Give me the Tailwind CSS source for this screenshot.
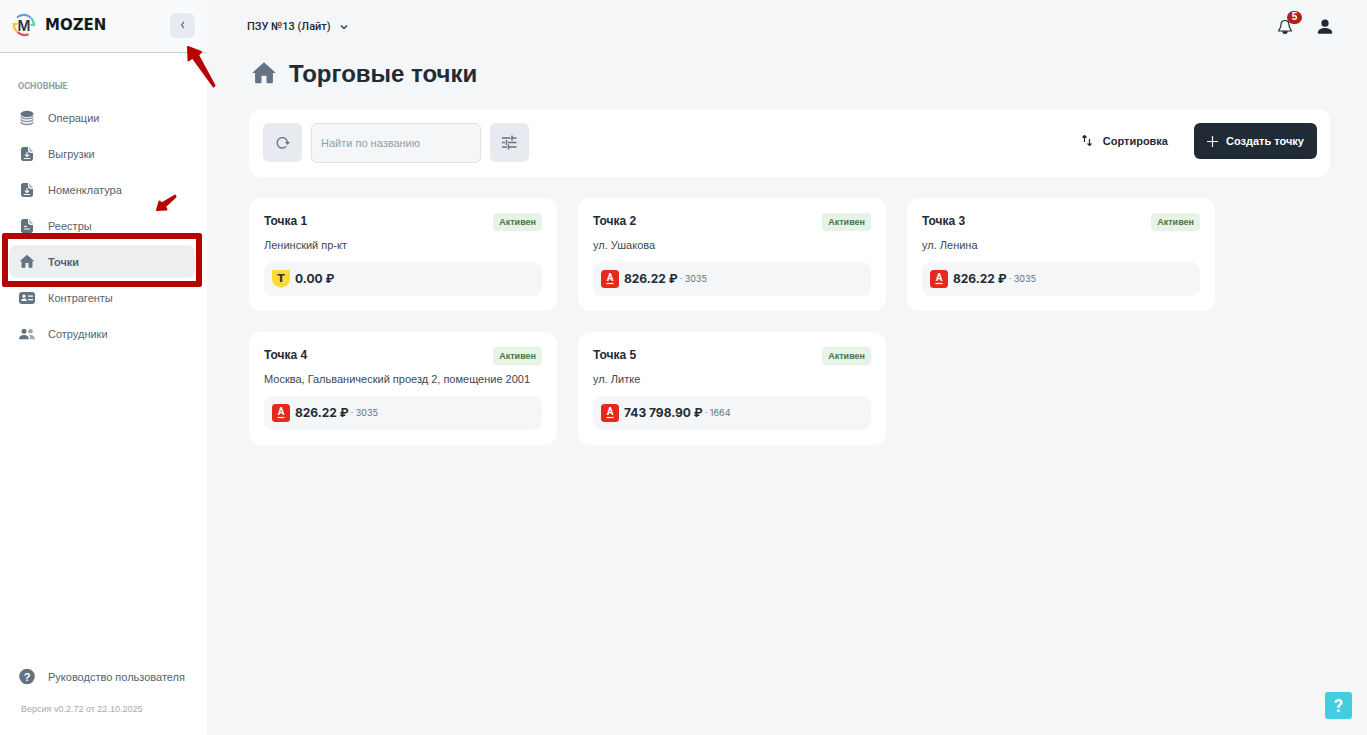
<!DOCTYPE html>
<html lang="ru">
  <head>
    <meta charset="UTF-8" />
    <meta name="viewport" content="width=device-width, initial-scale=1.0" />
    <title>Mozen — Торговые точки</title>
    <script src="https://cdn.jsdelivr.net/npm/@tailwindcss/browser@4"></script>
  </head>
  <body class="bg-[#f4f6f8] font-['Liberation_Sans',Arial,sans-serif] text-[11px] leading-4 text-[#212b36]">
    <!-- Icon sprite -->
    <svg class="hidden">
      <symbol id="home" viewBox="0 0 24 24">
        <path fill="currentColor" d="M12 1.200 1 11h2.800v8.600c0 .5.4.9.9.9h4.100c.5 0 .9-.4.9-.9v-6.100h4.600v6.100c0 .5.4.9.9.9h4.100c.5 0 .9-.4.9-.9V11H23z" />
      </symbol>
      <symbol id="export" viewBox="0 0 16 16">
        <path fill="currentColor" d="M4.500 1H9v3.200C9 5.800 10.200 7 11.800 7H14v5.500c0 1.700-1 2.500-2.500 2.500h-7C2.800 15 2 14 2 12.500v-9C2 2 3 1 4.500 1z" />
        <path fill="currentColor" opacity=".5" d="M10.200 1.100 14 5.700h-2.200c-1 0-1.600-.6-1.600-1.500z" />
        <path fill="none" stroke="#fff" stroke-width="1.100" stroke-linecap="round" stroke-linejoin="round" d="M8 6.200v4M6.200 8.800 8 10.600l1.800-1.800M5.200 12.500h5.600" />
      </symbol>
      <symbol id="registry" viewBox="0 0 16 16">
        <path fill="currentColor" d="M4.500 1H9v3.200C9 5.800 10.200 7 11.800 7H14v5.500c0 1.700-1 2.500-2.500 2.500h-7C2.800 15 2 14 2 12.500v-9C2 2 3 1 4.500 1z" />
        <path fill="currentColor" opacity=".5" d="M10.200 1.100 14 5.700h-2.200c-1 0-1.600-.6-1.600-1.500z" />
        <path fill="none" stroke="#fff" stroke-width="1.100" stroke-linecap="round" d="M5.500 8.500h2M5.500 11h5" />
      </symbol>
      <symbol id="alfa" viewBox="0 0 18 18">
        <rect width="18" height="18" rx="3.500" fill="#e42a1d" />
        <text x="9" y="11" text-anchor="middle" font-family="Roboto" font-size="10" font-weight="700" fill="#fff">A</text>
        <path d="M5.500 13.500h7" stroke="#fff" stroke-width="1.200" />
      </symbol>
    </svg>

    <div class="flex min-h-screen">
      <!-- Sidebar -->
      <aside class="flex w-[207px] shrink-0 flex-col bg-white">
        <div class="flex h-[53px] items-center justify-between border-b border-[#c9ced4] bg-[#f9fafb] pr-3 pb-[2px] pl-3">
          <a href="#" class="flex items-center gap-[9px] text-[#141a21]">
            <svg class="size-6" viewBox="0 0 24 24" fill="none" stroke-width="2.200">
              <path stroke="#5b9fe0" d="M5 4.500C9 1 15 1.200 18.500 4.500" />
              <path stroke="#5fd39a" d="M18.500 4.500c2.300 2 3.300 4.500 3.500 7.500h-3.500" />
              <path stroke="#f5c044" d="M5.500 11H1.800c0 3 1.200 6 3.700 8" />
              <path stroke="#e8505f" d="M5.500 19c3 3 7 3.800 11 2.400" />
              <text x="12" y="17.500" text-anchor="middle" font-family="Inter" font-size="14" font-weight="600" fill="#2d3540">M</text>
            </svg>
            <span class="font-['DejaVu_Sans',sans-serif] text-[15px] font-bold">MOZEN</span>
          </a>
          <button aria-label="Свернуть меню" class="flex size-[25px] items-center justify-center rounded-md bg-[#e7eaef] text-[#637381]">
            <svg class="size-3" viewBox="0 0 12 12" fill="none" stroke="currentColor" stroke-width="1.200"><path d="M7 3 4.500 6 7 9" /></svg>
          </button>
        </div>

        <nav class="pt-[26px] pr-3 pl-[9px]">
          <h2 class="mb-2 pl-[9px] font-['Roboto',sans-serif] text-[9px] leading-[14px] font-bold text-[#919eab]">ОСНОВНЫЕ</h2>
          <ul class="flex flex-col gap-[3px] text-[#55636f]">
            <li>
              <a href="#" class="flex h-[33px] items-center gap-3 rounded-lg px-[9px]">
                <svg class="h-4 w-[18px] text-[#637381]" viewBox="0 0 18 16">
                  <ellipse cx="9" cy="4" rx="6.500" ry="3.300" fill="currentColor" />
                  <path fill="none" stroke="currentColor" stroke-width="1.500" opacity=".75" d="M2.800 6.500c1.200 3 11.200 3 12.400 0M2.800 9.300c1.200 3 11.200 3 12.400 0M2.800 12c1.200 3.200 11.200 3.200 12.400 0" />
                </svg>
                Операции
              </a>
            </li>
            <li>
              <a href="#" class="flex h-[33px] items-center gap-3 rounded-lg px-[9px]">
                <svg class="h-4 w-[18px] text-[#637381]"><use href="#export" /></svg>
                Выгрузки
              </a>
            </li>
            <li>
              <a href="#" class="flex h-[33px] items-center gap-3 rounded-lg px-[9px]">
                <svg class="h-4 w-[18px] text-[#637381]"><use href="#export" /></svg>
                Номенклатура
              </a>
            </li>
            <li>
              <a href="#" class="flex h-[33px] items-center gap-3 rounded-lg px-[9px]">
                <svg class="h-4 w-[18px] text-[#637381]"><use href="#registry" /></svg>
                Реестры
              </a>
            </li>
            <li class="relative">
              <a href="#" aria-current="page" class="flex h-[33px] items-center gap-3 rounded-lg bg-[#edeef0] px-[9px] font-bold">
                <svg class="h-4 w-[18px] text-[#637381]"><use href="#home" /></svg>
                Точки
              </a>
              <span class="pointer-events-none absolute -inset-x-[7px] -top-3 -bottom-[9px] rounded-xs border-6 border-[#b50502]"></span>
            </li>
            <li>
              <a href="#" class="flex h-[33px] items-center gap-3 rounded-lg px-[9px]">
                <svg class="h-4 w-[18px] text-[#637381]" viewBox="0 0 18 16">
                  <rect x="1" y="2" width="16" height="12" rx="3" fill="currentColor" />
                  <g fill="#fff"><circle cx="6" cy="6.200" r="1.600" /><path d="M3.300 11c0-3.200 5.400-3.200 5.400 0z" /><path d="M10 5.500h5v1.200h-5zM10 9h5v1.200h-5z" /></g>
                </svg>
                Контрагенты
              </a>
            </li>
            <li>
              <a href="#" class="flex h-[33px] items-center gap-3 rounded-lg px-[9px]">
                <svg class="h-4 w-[18px] text-[#637381]" viewBox="0 0 18 16" fill="currentColor">
                  <circle cx="6" cy="5.200" r="2.500" />
                  <path d="M1 13.200c0-2.800 2-4.200 5-4.200s4.800 1.400 4.800 4.200z" />
                  <g opacity=".6"><circle cx="12.500" cy="5.200" r="2.300" /><path d="M11 9c3.500-.4 6 1 6 4.200h-5c.1-1.700-.2-3-1-4.200z" /></g>
                </svg>
                Сотрудники
              </a>
            </li>
          </ul>
        </nav>

        <div class="mt-auto px-[18px] pb-[19px]">
          <a href="#" class="flex h-[33px] items-center gap-3 whitespace-nowrap text-[#55636f]">
            <svg class="size-[18px] shrink-0" viewBox="0 0 18 18">
              <circle cx="9" cy="8.500" r="7.800" fill="#637381" />
              <text x="9" y="12.500" text-anchor="middle" font-size="11" font-weight="700" fill="#fff">?</text>
            </svg>
            Руководство пользователя
          </a>
          <p class="mt-[9px] pl-[3px] text-[9px] leading-[14px] text-[#a0abb6]">Версия v0.2.72 от 22.10.2025</p>
        </div>
      </aside>

      <!-- Content -->
      <div class="min-w-0 flex-1">
        <header class="flex h-[53px] items-center justify-between pr-[34px] pl-10">
          <button class="flex items-center gap-2 font-['Roboto',sans-serif] font-medium">
            ПЗУ №13 (Лайт)
            <svg class="size-[10px]" viewBox="0 0 10 10" fill="none" stroke="currentColor" stroke-width="1.200"><path d="M2 3.500 5 6.500 8 3.500" /></svg>
          </button>
          <div class="flex items-center gap-6">
            <button aria-label="Уведомления" class="relative">
              <svg class="size-4" viewBox="0 0 16 16" fill="none" stroke="currentColor" stroke-width="1.200" stroke-linejoin="round">
                <path d="M8 1.500c-2.800 0-4 1.900-4 4.200 0 3.300-1.600 4-2.500 6.300h13C13.600 9.700 12 9 12 5.700c0-2.300-1.200-4.200-4-4.200z" />
                <path fill="currentColor" d="M5.800 12.800h4.400C9.800 15 6.200 15 5.800 12.800z" />
              </svg>
              <span class="absolute -top-2 left-[10px] flex h-[13px] w-[15px] items-center justify-center rounded-full bg-[#b02318] text-[10px] font-bold text-white">5</span>
            </button>
            <button aria-label="Профиль">
              <svg class="size-4" viewBox="0 0 16 16" fill="currentColor">
                <circle cx="8" cy="4.200" r="3.600" />
                <path d="M.8 13.800C.8 7.500 15.200 7.500 15.200 13.800c0 .6-.3.900-.9.900H1.700c-.6 0-.9-.3-.9-.9z" />
              </svg>
            </button>
          </div>
        </header>

        <main class="pr-[37px] pl-[42px]">
          <div class="flex h-[42px] items-center gap-3 pl-[2px]">
            <svg class="size-[26px] text-[#637381]"><use href="#home" /></svg>
            <h1 class="text-2xl font-bold">Торговые точки</h1>
          </div>

          <div class="mt-[14px] flex items-start justify-between rounded-xl bg-white p-[14px] pr-[13px]">
            <div class="flex items-start gap-[9px]">
              <button aria-label="Обновить" class="flex size-[39px] items-center justify-center rounded-md bg-[#e7eaef] text-[#637381]">
                <svg class="size-4" viewBox="0 0 16 16" fill="none" stroke="currentColor" stroke-width="1.300">
                  <path d="M11 11.500A5.200 5.200 0 1 1 12.500 7.500" />
                  <path fill="currentColor" stroke="none" d="M10 7h5l-2.500 3z" />
                </svg>
              </button>
              <input type="text" aria-label="Найти по названию" placeholder="Найти по названию" class="h-10 w-[170px] rounded-md border border-[#dce0e4] bg-[#f4f6f8] px-[9px] placeholder:text-[#919eab]" />
              <button aria-label="Фильтры" class="flex size-[39px] items-center justify-center rounded-md bg-[#e7eaef] text-[#637381]">
                <svg class="size-4" viewBox="0 0 16 16" fill="none" stroke="currentColor" stroke-width="1.500">
                  <path d="M0 3h8.500M10 .5v5M10 3h4.500M0 7.500h3M4.500 5v5M6 7.500h8.500M0 12h5M6.500 9.500v5M6.500 12h8" />
                </svg>
              </button>
            </div>
            <div class="flex items-center gap-[26px] font-bold">
              <button class="flex items-center gap-[10px]">
                <svg class="size-3" viewBox="0 0 12 12" fill="none" stroke="currentColor" stroke-width="1.200">
                  <path d="M3.500 7V.5M1.500 2.500l2-2 2 2M8.500 4v6.500M6.500 8.500l2 2 2-2" />
                </svg>
                Сортировка
              </button>
              <button class="flex h-9 items-center gap-2 rounded-md bg-[#212b36] px-[13px] text-white">
                <svg class="size-[11px]" viewBox="0 0 11 11" stroke="currentColor" stroke-width="1.200"><path d="M5.500 0v11M0 5.500h11" /></svg>
                Создать точку
              </button>
            </div>
          </div>

          <div class="mt-[21px] grid grid-cols-[repeat(auto-fill,308px)] gap-[21px]">
            <article class="rounded-xl bg-white p-[15px]">
              <div class="flex items-start justify-between">
                <h3 class="text-[12px] leading-4 font-bold">Точка 1</h3>
                <span class="flex h-[18px] items-center rounded bg-[#e8f3e8] px-[6px] text-[9px] font-bold text-[#47784a]">Активен</span>
              </div>
              <p class="mt-[6px] text-[#3d4853]">Ленинский пр-кт</p>
              <div class="mt-[9px] flex h-[34px] items-center gap-[5px] rounded-[9px] bg-[#f4f6f8] px-2">
                <svg class="size-[18px]" viewBox="0 0 18 18">
                  <path fill="#fbdc36" d="M0 0h18v9c0 3.200-1.500 5.300-4 6.700L9 18l-5-2.300C1.500 14.300 0 12.200 0 9z" />
                  <text x="9" y="12" text-anchor="middle" font-family="DejaVu Sans" font-size="11" font-weight="700" fill="#333">T</text>
                </svg>
                <span class="font-['Inter',sans-serif] text-[12px] font-bold">0.00 ₽</span>
              </div>
            </article>

            <article class="rounded-xl bg-white p-[15px]">
              <div class="flex items-start justify-between">
                <h3 class="text-[12px] leading-4 font-bold">Точка 2</h3>
                <span class="flex h-[18px] items-center rounded bg-[#e8f3e8] px-[6px] text-[9px] font-bold text-[#47784a]">Активен</span>
              </div>
              <p class="mt-[6px] text-[#3d4853]">ул. Ушакова</p>
              <div class="mt-[9px] flex h-[34px] items-center gap-[5px] rounded-[9px] bg-[#f4f6f8] px-2">
                <svg class="size-[18px]"><use href="#alfa" /></svg>
                <div class="flex items-center gap-[2px] font-['Inter',sans-serif]">
                  <span class="text-[12px] font-bold">826.22 ₽</span>
                  <span class="text-[9px] text-[#637381]">· 3035</span>
                </div>
              </div>
            </article>

            <article class="rounded-xl bg-white p-[15px]">
              <div class="flex items-start justify-between">
                <h3 class="text-[12px] leading-4 font-bold">Точка 3</h3>
                <span class="flex h-[18px] items-center rounded bg-[#e8f3e8] px-[6px] text-[9px] font-bold text-[#47784a]">Активен</span>
              </div>
              <p class="mt-[6px] text-[#3d4853]">ул. Ленина</p>
              <div class="mt-[9px] flex h-[34px] items-center gap-[5px] rounded-[9px] bg-[#f4f6f8] px-2">
                <svg class="size-[18px]"><use href="#alfa" /></svg>
                <div class="flex items-center gap-[2px] font-['Inter',sans-serif]">
                  <span class="text-[12px] font-bold">826.22 ₽</span>
                  <span class="text-[9px] text-[#637381]">· 3035</span>
                </div>
              </div>
            </article>

            <article class="rounded-xl bg-white p-[15px]">
              <div class="flex items-start justify-between">
                <h3 class="text-[12px] leading-4 font-bold">Точка 4</h3>
                <span class="flex h-[18px] items-center rounded bg-[#e8f3e8] px-[6px] text-[9px] font-bold text-[#47784a]">Активен</span>
              </div>
              <p class="mt-[6px] text-[#3d4853]">Москва, Гальванический проезд 2, помещение 2001</p>
              <div class="mt-[9px] flex h-[34px] items-center gap-[5px] rounded-[9px] bg-[#f4f6f8] px-2">
                <svg class="size-[18px]"><use href="#alfa" /></svg>
                <div class="flex items-center gap-[2px] font-['Inter',sans-serif]">
                  <span class="text-[12px] font-bold">826.22 ₽</span>
                  <span class="text-[9px] text-[#637381]">· 3035</span>
                </div>
              </div>
            </article>

            <article class="rounded-xl bg-white p-[15px]">
              <div class="flex items-start justify-between">
                <h3 class="text-[12px] leading-4 font-bold">Точка 5</h3>
                <span class="flex h-[18px] items-center rounded bg-[#e8f3e8] px-[6px] text-[9px] font-bold text-[#47784a]">Активен</span>
              </div>
              <p class="mt-[6px] text-[#3d4853]">ул. Литке</p>
              <div class="mt-[9px] flex h-[34px] items-center gap-[5px] rounded-[9px] bg-[#f4f6f8] px-2">
                <svg class="size-[18px]"><use href="#alfa" /></svg>
                <div class="flex items-center gap-[2px] font-['Inter',sans-serif]">
                  <span class="text-[12px] font-bold">743 798.90 ₽</span>
                  <span class="text-[9px] text-[#637381]">· 1664</span>
                </div>
              </div>
            </article>
          </div>
        </main>
      </div>
    </div>

    <!-- Pointer arrows -->
    <svg class="pointer-events-none absolute top-[45px] left-[186px] h-[44px] w-[32px]" viewBox="0 0 32 44">
      <path fill="#b50502" stroke="#b50502" stroke-width="2" stroke-linejoin="round" d="M2 2 15 7 12 10 28.500 40.500 27.500 41.500 6.500 12.500 2.500 15.500z" />
    </svg>
    <svg class="pointer-events-none absolute top-[193px] left-[155px] h-[20px] w-[23px]" viewBox="0 0 23 20">
      <path fill="#b50502" stroke="#b50502" stroke-width="2" stroke-linejoin="round" d="M2 17 4.500 8.500l2 2L20 2.500l.5 1.200L10 13.500l1.500 3z" />
    </svg>

    <button aria-label="Помощь" class="fixed right-[15px] bottom-4 flex size-[27px] items-center justify-center rounded-[3px] bg-[#42cde0] font-['Roboto',sans-serif] text-[18px] font-bold text-white">?</button>
  </body>
</html>
